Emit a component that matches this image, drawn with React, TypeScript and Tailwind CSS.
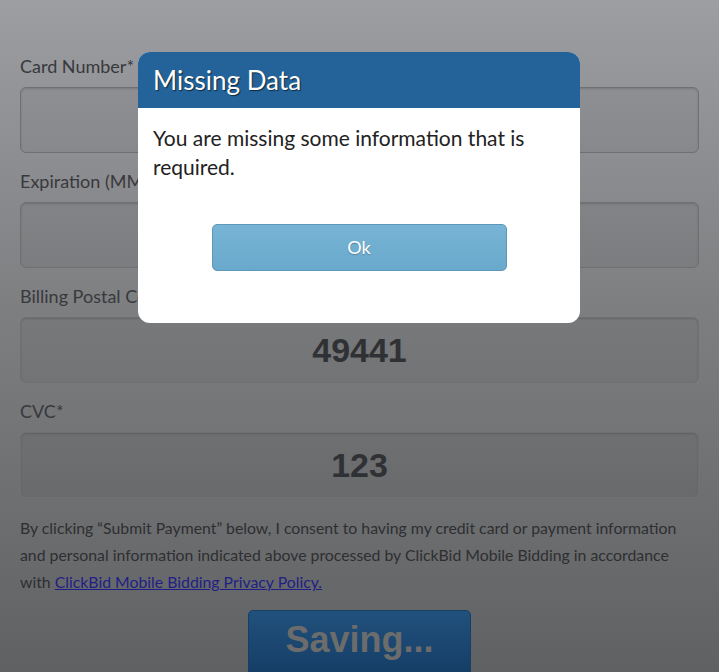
import React from "react";

const fields = [
  { label: "Card Number*", value: "" },
  { label: "Expiration (MM/YY)*", value: "" },
  { label: "Billing Postal Code*", value: "49441" },
  { label: "CVC*", value: "123" },
];

export default function App() {
  return (
    <div className="relative h-[672px] w-[719px] overflow-hidden bg-[linear-gradient(to_bottom,#9d9ea2_0%,#7e7f81_45%,#606163_100%)] font-['Lato','Open_Sans',sans-serif]">
      {/* page behind the overlay */}
      <div className="px-5 pt-[54px]">
        {fields.map((f) => (
          <div key={f.label} className="mb-[16px]">
            <label className="block text-[18px] leading-[24px] text-[#38393c]">{f.label}</label>
            <div className="mt-[9px] flex h-[66px] items-center justify-center rounded-[6px] border border-[#6f7072] bg-black/[0.04] shadow-[inset_0_1px_2px_rgba(0,0,0,0.15)]">
              <span className="font-['Liberation_Sans',Arial,sans-serif] text-[34px] font-bold text-[#303135]">{f.value}</span>
            </div>
          </div>
        ))}

        <p className="text-[15.8px] leading-[27px] text-[#2e2f31]">
          By clicking “Submit Payment” below, I consent to having my credit card or payment information and
          personal information indicated above processed by ClickBid Mobile Bidding in accordance with{" "}
          <a className="text-[#1f1f86] underline">ClickBid Mobile Bidding Privacy Policy.</a>
        </p>

        <div className="mt-[15px] flex justify-center">
          <button className="h-[80px] w-[223px] rounded-[5px] border border-[#173f66] bg-[linear-gradient(to_bottom,#21517d,#123960)] pb-[20px] font-['Liberation_Sans',Arial,sans-serif] text-[36px] font-bold text-[#6c6c6c]">
            Saving...
          </button>
        </div>
      </div>

      {/* modal */}
      <div className="absolute left-[138px] top-[52px] w-[442px] overflow-hidden rounded-[12px] bg-white">
        <div className="flex h-[56px] items-center bg-[#236399] px-[15px]">
          <h2 className="text-[26px] text-white [text-shadow:1px_1px_1px_rgba(0,0,0,0.6)]">Missing Data</h2>
        </div>
        <div className="px-[15px] pt-[15px] pb-[52px]">
          <p className="text-[21px] leading-[29px] text-[#222]">
            You are missing some information that is required.
          </p>
          <div className="mt-[43px] flex justify-center">
            <button className="h-[47px] w-[295px] rounded-[5px] border border-[#5d98b9] bg-[linear-gradient(to_bottom,#77b4d5,#6aa9cc)] text-[18px] text-white [text-shadow:0_1px_1px_rgba(0,0,0,0.25)]">
              Ok
            </button>
          </div>
        </div>
      </div>
    </div>
  );
}
